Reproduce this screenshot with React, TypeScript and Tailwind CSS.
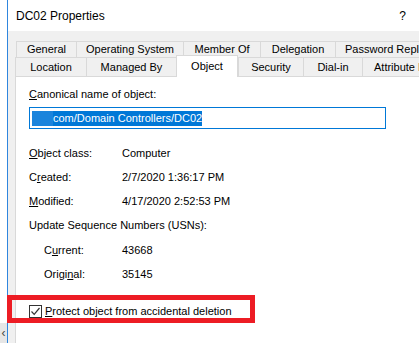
const font = { fontFamily: '"Liberation Sans", Arial, sans-serif' };

const Tab = ({ label, w, h }: { label: string; w: string; h: string }) => (
  <div className={`${w} ${h} shrink-0 flex items-center justify-center border-t border-l border-[#d9d9d9] bg-[#f0f0f0] text-[11px] text-black whitespace-nowrap overflow-hidden`}>
    {label}
  </div>
);

const Row = ({ label, value, indent }: { label: React.ReactNode; value?: string; indent?: boolean }) => (
  <div className={`h-[24px] flex items-center text-[11px] text-black whitespace-nowrap ${indent ? 'pl-[15px]' : ''}`}>
    <span className={value ? (indent ? 'w-[78px]' : 'w-[93px]') : ''}>{label}</span>
    {value && <span>{value}</span>}
  </div>
);

export default function App() {
  return (
    <div className="w-[419px] h-[343px] bg-white flex overflow-hidden relative" style={font}>
      {/* desktop edge */}
      <div className="w-[7px] shrink-0 flex flex-col">
        <div className="flex-1 bg-white" />
        <div className="h-[20px] bg-[#e6e6e6] flex items-center justify-center text-[12px] text-[#444] leading-none">‹</div>
      </div>
      <div className="w-px shrink-0 bg-[#2f86de]" />

      <div className="flex-1 min-w-0 flex flex-col overflow-hidden">
        {/* title bar */}
        <div className="h-[31px] bg-white flex items-center justify-between pl-[8px] pr-[13px]">
          <span className="text-[12px] text-black">DC02 Properties</span>
          <span className="text-[12px] text-black">?</span>
        </div>

        {/* body */}
        <div className="flex-1 bg-[#f0f0f0] flex flex-col pt-[10px]">
          <div className="flex ml-[8px]">
            <Tab label="General" w="w-[60px]" h="h-[16px]" />
            <Tab label="Operating System" w="w-[107px]" h="h-[16px]" />
            <Tab label="Member Of" w="w-[77px]" h="h-[16px]" />
            <Tab label="Delegation" w="w-[75px]" h="h-[16px]" />
            <div className="w-[90px] h-[16px] shrink-0 flex items-center pl-[9px] border-t border-l border-[#d9d9d9] text-[11px] text-black whitespace-nowrap overflow-hidden">
              Password Replication
            </div>
          </div>
          <div className="flex ml-[7px] items-end">
            <Tab label="Location" w="w-[71px]" h="h-[19px]" />
            <Tab label="Managed By" w="w-[90px]" h="h-[19px]" />
            <div className="w-[62px] h-[22px] -mt-[2px] -mb-px relative z-10 shrink-0 flex items-start pt-[2px] justify-center border-t border-l border-r border-[#d9d9d9] bg-white text-[11px] text-black">
              Object
            </div>
            <Tab label="Security" w="w-[65px]" h="h-[19px]" />
            <Tab label="Dial-in" w="w-[59px]" h="h-[19px]" />
            <div className="w-[70px] h-[19px] shrink-0 flex items-center pl-[11px] border-t border-l border-[#d9d9d9] text-[11px] text-black whitespace-nowrap">
              Attribute Editor
            </div>
          </div>

          {/* tab panel */}
          <div className="flex-1 ml-[7px] bg-white border-t border-l border-[#d9d9d9] flex flex-col pl-[13px] pt-[5px]">
            <div className="h-[24px] flex items-center text-[11px] text-black">
              <span><u>C</u>anonical name of object:</span>
            </div>
            <div className="mt-[1px] w-[357px] h-[22px] border border-[#0078d7] flex items-center pl-[2px]">
              <span className="h-[15px] flex items-center bg-[#0078d7] text-white text-[11px] whitespace-nowrap">
                <span className="w-[21px] h-[15px] bg-[#1b84dc]" />
                com/Domain Controllers/DC02
              </span>
            </div>
            <div className="mt-[12px]">
              <Row label={<><u>O</u>bject class:</>} value="Computer" />
              <Row label={<>C<u>r</u>eated:</>} value="2/7/2020 1:36:17 PM" />
              <Row label={<><u>M</u>odified:</>} value="4/17/2020 2:52:53 PM" />
              <Row label="Update Sequence Numbers (USNs):" />
              <div className="mt-[1px]">
                <Row indent label={<>C<u>u</u>rrent:</>} value="43668" />
                <Row indent label={<>Origi<u>n</u>al:</>} value="35145" />
              </div>
            </div>
            <div className="mt-[13px] h-[24px] flex items-center text-[11px] text-black gap-[3px]">
              <span className="w-[13px] h-[13px] border border-[#333] bg-white flex items-center justify-center">
                <svg width="11" height="11" viewBox="0 0 11 11">
                  <path d="M1.5 5.5 L4.2 8.3 L9.5 2" fill="none" stroke="#333" strokeWidth="1.2" />
                </svg>
              </span>
              <span><u>P</u>rotect object from accidental deletion</span>
            </div>
          </div>
        </div>
      </div>

      {/* red annotation box */}
      <div className="absolute left-[7px] top-[295px] w-[248px] h-[28px] border-[5px] border-[#ed1c24]" />
    </div>
  );
}
